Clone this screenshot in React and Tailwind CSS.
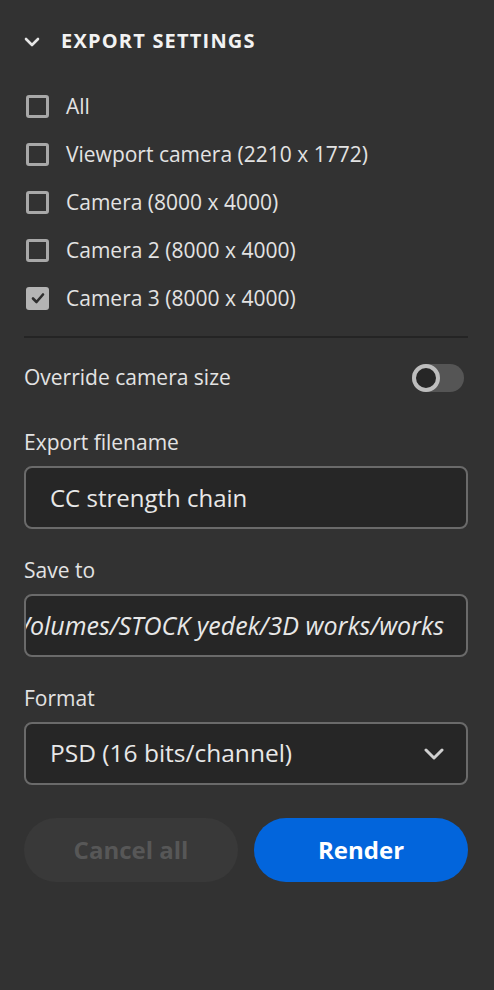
import React from "react";

const font = { fontFamily: '"Open Sans", "Noto Sans", sans-serif' };

function Checkbox({ checked, label }) {
  return (
    <div className="flex h-12 items-center">
      <div
        className={
          "flex h-[23px] w-[23px] items-center justify-center rounded-[3px] ml-[2px] " +
          (checked ? "bg-[#b4b4b4]" : "border-[3px] border-[#a8a8a8]")
        }
      >
        {checked && (
          <svg width="16" height="16" viewBox="0 0 16 16" fill="none">
            <path d="M3 8.5 L6.5 12 L13 4.5" stroke="#2e2e2e" strokeWidth="2.6" strokeLinecap="round" strokeLinejoin="round" />
          </svg>
        )}
      </div>
      <span className="ml-[17px] text-[21px] text-[#e3e3e3] leading-6">{label}</span>
    </div>
  );
}

export default function App() {
  return (
    <div className="min-h-[990px] w-[494px] bg-[#323232] pl-6 pr-[26px]" style={font}>
      <div className="flex h-[82px] items-center">
        <svg width="16" height="10" viewBox="0 0 16 10" fill="none" className="mt-[1px]">
          <path d="M2 2 L8 8 L14 2" stroke="#e6e6e6" strokeWidth="2.6" strokeLinecap="round" strokeLinejoin="round" />
        </svg>
        <span className="ml-[21px] text-[20px] font-bold tracking-[1.2px] text-[#f2f2f2]">EXPORT SETTINGS</span>
      </div>
      <Checkbox label="All" />
      <Checkbox label="Viewport camera (2210 x 1772)" />
      <Checkbox label="Camera (8000 x 4000)" />
      <Checkbox label="Camera 2 (8000 x 4000)" />
      <Checkbox checked label="Camera 3 (8000 x 4000)" />
      <div className="mt-[14px] h-[2px] bg-[#242424]" />
      <div className="flex h-[80px] items-center justify-between">
        <span className="text-[21px] text-[#e3e3e3]">Override camera size</span>
        <div className="relative mr-[4px] h-[28px] w-[52px] rounded-full bg-[#555555]">
          <div className="absolute left-0 top-0 h-[28px] w-[28px] rounded-full border-[4px] border-[#bdbdbd] bg-[#262626]" />
        </div>
      </div>
      <div className="mt-3 h-6 text-[21px] leading-6 text-[#e3e3e3]">Export filename</div>
      <div className="mt-3 flex h-[63px] items-center rounded-lg border-2 border-[#6a6a6a] bg-[#262626] pl-[24px]">
        <span className="text-[24px] text-[#e8e8e8]">CC strength chain</span>
      </div>
      <div className="mt-[29px] h-6 text-[21px] leading-6 text-[#e3e3e3]">Save to</div>
      <div className="mt-3 flex h-[63px] items-center justify-end overflow-hidden rounded-lg border-2 border-[#6a6a6a] bg-[#262626] pr-[22px]">
        <span className="shrink-0 whitespace-nowrap text-[25px] italic text-[#e8e8e8]">/Volumes/STOCK yedek/3D works/works</span>
      </div>
      <div className="mt-[29px] h-6 text-[21px] leading-6 text-[#e3e3e3]">Format</div>
      <div className="mt-3 flex h-[63px] items-center justify-between rounded-lg border-2 border-[#6a6a6a] bg-[#262626] pl-[24px] pr-[22px]">
        <span className="text-[24.5px] text-[#e8e8e8]">PSD (16 bits/channel)</span>
        <svg width="20" height="12" viewBox="0 0 20 12" fill="none">
          <path d="M2 2 L10 10 L18 2" stroke="#d0d0d0" strokeWidth="3" strokeLinecap="round" strokeLinejoin="round" />
        </svg>
      </div>
      <div className="mt-[33px] grid grid-cols-2 gap-4">
        <div className="flex h-16 items-center justify-center rounded-full bg-[#393939] text-[24px] font-bold text-[#575757]">Cancel all</div>
        <div className="flex h-16 items-center justify-center rounded-full bg-[#0265dc] text-[24px] font-bold text-white">Render</div>
      </div>
    </div>
  );
}
